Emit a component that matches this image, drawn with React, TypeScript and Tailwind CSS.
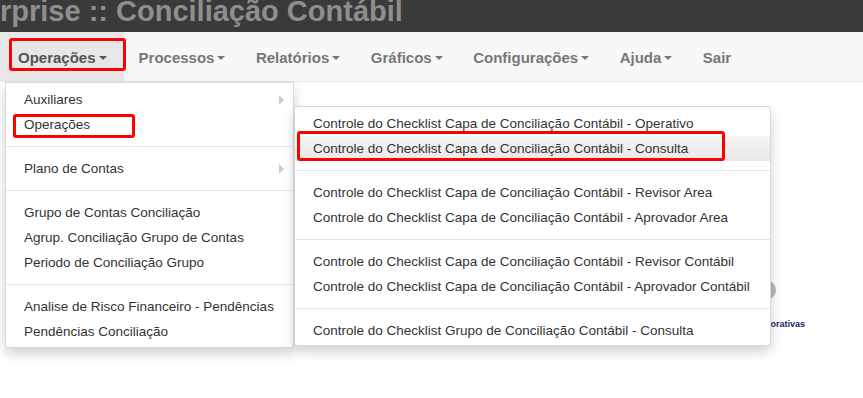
import React from 'react';

type NavItem = { label: string; caret?: boolean; active?: boolean };

const navItems: NavItem[] = [
  { label: 'Operações', caret: true, active: true },
  { label: 'Processos', caret: true },
  { label: 'Relatórios', caret: true },
  { label: 'Gráficos', caret: true },
  { label: 'Configurações', caret: true },
  { label: 'Ajuda', caret: true },
  { label: 'Sair' },
];

type MenuItem = { label: string; sub?: boolean; open?: boolean; active?: boolean } | null;

// null = divider
const mainMenu: MenuItem[] = [
  { label: 'Auxiliares', sub: true },
  { label: 'Operações', open: true },
  null,
  { label: 'Plano de Contas', sub: true },
  null,
  { label: 'Grupo de Contas Conciliação' },
  { label: 'Agrup. Conciliação Grupo de Contas' },
  { label: 'Periodo de Conciliação Grupo' },
  null,
  { label: 'Analise de Risco Financeiro - Pendências' },
  { label: 'Pendências Conciliação' },
];

const base = 'Controle do Checklist Capa de Conciliação Contábil - ';
const subMenu: MenuItem[] = [
  { label: base + 'Operativo' },
  { label: base + 'Consulta', active: true },
  null,
  { label: base + 'Revisor Area' },
  { label: base + 'Aprovador Area' },
  null,
  { label: base + 'Revisor Contábil' },
  { label: base + 'Aprovador Contábil' },
  null,
  { label: 'Controle do Checklist Grupo de Conciliação Contábil - Consulta' },
];

const Caret = () => (
  <span className="ml-[3px] inline-block h-0 w-0 border-t-[4px] border-x-[4px] border-t-current border-x-transparent align-middle" />
);

const Divider = () => <div className="my-[9px] h-px bg-[#e5e5e5]" />;

const Highlight = ({ className }: { className: string }) => (
  <div className={`pointer-events-none absolute rounded-[3px] border-[3px] border-[#ff0000] ${className}`} />
);

const SubMenu = () => (
  <div className="absolute left-[288px] top-[-6px] z-10 w-[477px] rounded-[4px] border border-black/15 bg-white pt-[4px] pb-[2px] shadow-[0_6px_12px_rgba(0,0,0,0.175)]">
    {subMenu.map((m, i) =>
      m === null ? (
        <Divider key={i} />
      ) : (
        <div
          key={i}
          className={`relative h-[25px] whitespace-nowrap pl-[18px] leading-[25px] ${
            m.active ? 'bg-linear-to-b from-[#f5f5f5] to-[#e8e8e8]' : ''
          }`}
        >
          {m.label}
          {m.active && <Highlight className="left-[2px] top-[-5px] h-[30px] w-[428px]" />}
        </div>
      )
    )}
  </div>
);

const MainMenu = () => (
  <div className="absolute left-[5px] top-[50px] w-[289px] rounded-b-[4px] border border-black/15 bg-white pt-[4px] pb-[3px] text-[13.5px] font-normal text-[#333] shadow-[0_6px_12px_rgba(0,0,0,0.175)]">
    {mainMenu.map((m, i) =>
      m === null ? (
        <Divider key={i} />
      ) : (
        <div key={i} className="relative flex h-[25px] items-center justify-between whitespace-nowrap pl-[18px] pr-[9px] leading-[25px]">
          <span>{m.label}</span>
          {m.sub && (
            <span className="inline-block h-0 w-0 border-l-[5px] border-y-[5px] border-l-[#ccc] border-y-transparent" />
          )}
          {m.open && (
            <>
              <Highlight className="left-[7px] top-[2px] h-[24px] w-[122px]" />
              <SubMenu />
            </>
          )}
        </div>
      )
    )}
  </div>
);

const App: React.FC = () => {
  return (
    <div className="flex h-[398px] w-[863px] flex-col overflow-hidden bg-white font-['Liberation_Sans',Arial,sans-serif]">
      {/* title bar */}
      <div className="h-[32px] shrink-0 overflow-hidden bg-[#3a3a3a]">
        <div className="-mt-[3px] whitespace-nowrap text-[29px] font-bold leading-[29px] text-[#8e8e8e]">
          rprise :: Conciliação Contábil
        </div>
      </div>

      {/* navbar */}
      <nav className="relative z-10 flex h-[50px] shrink-0 border-b border-[#e7e7e7] bg-[#f8f8f8]">
        {navItems.map((item, i) => (
          <div
            key={item.label}
            className={`relative flex h-full items-center whitespace-nowrap pt-[3px] text-[15px] font-bold ${
              i === 0 ? 'pl-[18px] pr-[17px]' : 'pl-[15px] pr-[15.5px]'
            } ${item.active ? 'bg-[#e7e7e7] text-[#555]' : 'text-[#777]'}`}
          >
            {item.label}
            {item.caret && <Caret />}
            {item.active && (
              <>
                <Highlight className="left-[9px] top-[6px] h-[33px] w-[117px]" />
                <MainMenu />
              </>
            )}
          </div>
        ))}
      </nav>

      {/* page content, mostly hidden behind the menus */}
      <main className="flex flex-col items-end pr-[58px] pt-[198px]">
        <div className="mr-[29px] h-[20px] w-[20px] rounded-full bg-[#b8b8b8]" />
        <div className="mt-[18px] whitespace-nowrap text-[9px] font-bold leading-[12px] text-[#1b2566]">
          Informações Corporativas
        </div>
      </main>
    </div>
  );
};

export default App;
